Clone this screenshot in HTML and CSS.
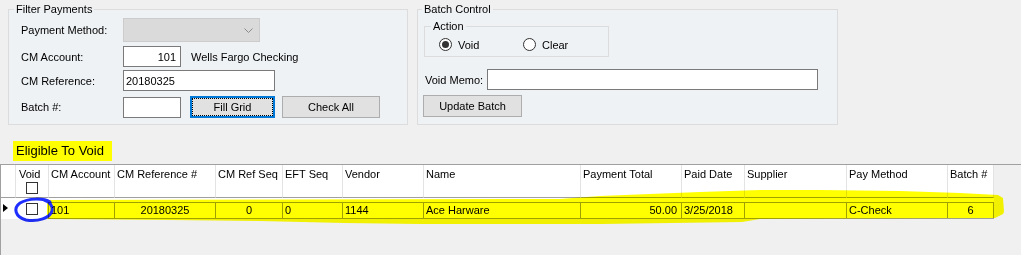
FILE: index.html
```html
<!DOCTYPE html>
<html>
<head>
<meta charset="utf-8">
<link rel="stylesheet" href="styles.css">
</head>
<body>
<div class="top">
  <fieldset class="box filter">
    <legend>Filter Payments</legend>
    <div class="frow r1">
      <label>Payment Method:</label>
      <div class="combo"><svg width="9" height="5" viewBox="0 0 9 5"><polyline points="0.5,0.5 4.5,4.5 8.5,0.5" fill="none" stroke="#8a8a8a" stroke-width="1"/></svg></div>
    </div>
    <div class="frow r2">
      <label>CM Account:</label>
      <div class="tb tb-num">101</div>
      <span class="desc">Wells Fargo Checking</span>
    </div>
    <div class="frow r3">
      <label>CM Reference:</label>
      <div class="tb tb-ref">20180325</div>
    </div>
    <div class="frow r4">
      <label>Batch #:</label>
      <div class="tb tb-num"></div>
      <button class="btn btn-fill"><span class="focus">Fill Grid</span></button>
      <button class="btn btn-check">Check All</button>
    </div>
  </fieldset>
  <fieldset class="box batch">
    <legend>Batch Control</legend>
    <fieldset class="action">
      <legend>Action</legend>
      <div class="radios">
        <div class="ropt ropt-void"><span class="radio checked"></span><span class="rlabel">Void</span></div>
        <div class="ropt"><span class="radio"></span><span class="rlabel">Clear</span></div>
      </div>
    </fieldset>
    <div class="memo">
      <label>Void Memo:</label>
      <div class="tb tb-memo"></div>
    </div>
    <button class="btn btn-update">Update Batch</button>
  </fieldset>
</div>

<div class="title">Eligible To Void</div>

<div class="grid">
  <div class="ghead">
    <div class="hc"></div>
    <div class="hc hc-void"><span>Void</span><span class="cb"></span></div>
    <div class="hc">CM Account</div>
    <div class="hc">CM Reference #</div>
    <div class="hc">CM Ref Seq</div>
    <div class="hc">EFT Seq</div>
    <div class="hc">Vendor</div>
    <div class="hc">Name</div>
    <div class="hc">Payment Total</div>
    <div class="hc">Paid Date</div>
    <div class="hc">Supplier</div>
    <div class="hc">Pay Method</div>
    <div class="hc">Batch #</div>
  </div>
  <div class="grow">
    <div class="rh"><span class="arrow"></span></div>
    <div class="dvoid"><span class="cb"></span></div>
    <div class="dc dc-first">101</div>
    <div class="dc center">20180325</div>
    <div class="dc center">0</div>
    <div class="dc">0</div>
    <div class="dc">1144</div>
    <div class="dc">Ace Harware</div>
    <div class="dc right">50.00</div>
    <div class="dc">3/25/2018</div>
    <div class="dc"></div>
    <div class="dc">C-Check</div>
    <div class="dc center">6</div>
  </div>
  <svg class="marks" width="1021" height="91" viewBox="0 0 1021 91">
    <polygon fill="#ffff00" points="47,36 560,35 600,32 650,30 700,28 760,26 820,26 900,27 960,29 998,31 1003,34 1004,48 1003,50 995,54 760,55 742,58 600,60 420,60 345,59 260,57 170,56 47,55"/>
    <path d="M50,38 C44,34 28,34 20,39 C13,44 15,53 26,56 C38,58 50,54 52,47 C53,42 50,38 44,36" fill="none" stroke="#1f2fff" stroke-width="3" stroke-linecap="round"/>
  </svg>
</div>
</body>
</html>
```

FILE: styles.css
```css
* { box-sizing: border-box; }

body {
  margin: 0;
  width: 1021px;
  height: 255px;
  overflow: hidden;
  background: #f0f0f0;
  font-family: "Liberation Sans", Arial, sans-serif;
  font-size: 11px;
  color: #000;
}

.top {
  display: flex;
  gap: 9px;
  padding: 3px 0 0 8px;
}

.box {
  margin: 0;
  border: 1px solid #dcdcdc;
  background: #eff2f5;
  min-inline-size: 0;
  height: 122px;
}

legend {
  padding: 0 2px;
  font-size: 11px;
  line-height: 12px;
}

.filter { width: 400px; padding: 0 0 0 5px; }
.batch { width: 421px; padding: 0 0 0 4px; }

.frow {
  display: flex;
  align-items: center;
  padding-left: 7px;
}
.frow label { width: 102px; }
.r1 { margin-top: 3px; height: 24px; }
.r2 { margin-top: 4px; height: 21px; }
.r3 { margin-top: 3px; height: 21px; }
.r4 { margin-top: 5px; height: 22px; }

.combo {
  width: 137px;
  height: 24px;
  background: #dadada;
  border: 1px solid #cccccc;
  display: flex;
  align-items: center;
  justify-content: flex-end;
  padding-right: 6px;
}

.tb {
  height: 21px;
  border: 1px solid #7a7a7a;
  background: #fff;
  display: flex;
  align-items: center;
}
.tb-num { width: 58px; justify-content: flex-end; padding-right: 4px; }
.tb-ref { width: 152px; padding-left: 2px; }
.tb-memo { width: 331px; }

.desc { margin-left: 10px; }

.btn {
  height: 22px;
  border: 1px solid #adadad;
  background: #e1e1e1;
  font: inherit;
  color: #000;
  padding: 0;
  display: flex;
  align-items: center;
  justify-content: center;
}
.btn-fill {
  width: 85px;
  margin-left: 9px;
  border: 2px solid #0078d7;
  align-items: stretch;
}
.btn-fill .focus {
  flex: 1;
  border: 1px dotted #000;
  display: flex;
  align-items: center;
  justify-content: center;
}
.btn-check { width: 98px; margin-left: 7px; }

.action {
  margin: 5px 0 0 2px;
  width: 185px;
  height: 37px;
  border: 1px solid #dcdcdc;
  padding: 0 0 0 6px;
  min-inline-size: 0;
}
.radios {
  display: flex;
  align-items: center;
  margin-top: 5px;
  height: 15px;
  padding-left: 8px;
}
.ropt { display: flex; align-items: center; }
.ropt-void { width: 84px; }
.radio {
  width: 13px;
  height: 13px;
  border: 1px solid #333;
  border-radius: 50%;
  background: #fff;
  display: flex;
  align-items: center;
  justify-content: center;
}
.radio.checked::after {
  content: "";
  width: 7px;
  height: 7px;
  border-radius: 50%;
  background: #333;
}
.rlabel { margin-left: 6px; }

.memo {
  display: flex;
  align-items: center;
  margin-top: 12px;
  padding-left: 3px;
}
.memo label { width: 62px; }

.btn-update { width: 99px; margin: 5px 0 0 1px; }

.title {
  width: fit-content;
  margin: 16px 0 0 13px;
  padding: 2px 8px 2px 3px;
  background: #ffff00;
  font-size: 13px;
  line-height: 16px;
}

.grid {
  position: relative;
  margin-top: 3px;
  height: 91px;
  border-top: 1px solid #a0a0a0;
  border-left: 1px solid #a0a0a0;
}

.ghead, .grow {
  display: grid;
  grid-template-columns: 15px 33px 66px 101px 67px 60px 81px 157px 101px 63px 102px 101px 46px;
  width: 993px;
}

.ghead { height: 33px; }
.hc {
  background: #fff;
  border-right: 1px solid #e3e3e3;
  border-bottom: 1px solid #a0a0a0;
  padding: 3px 0 0 2px;
  line-height: 13px;
  white-space: nowrap;
  overflow: hidden;
}
.hc-void {
  display: flex;
  flex-direction: column;
  padding-left: 3px;
}
.hc-void .cb { margin: 1px 0 0 7px; }

.cb {
  display: block;
  width: 12px;
  height: 12px;
  border: 1px solid #333;
  background: #fff;
}

.grow {
  height: 21px;
  background: #fff;
}
.rh { padding: 6px 0 0 2px; }
.arrow {
  display: block;
  width: 0;
  height: 0;
  border-left: 5px solid #000;
  border-top: 4.5px solid transparent;
  border-bottom: 4.5px solid transparent;
}
.dvoid { padding: 5px 0 0 10px; }

.dc {
  margin-top: 4px;
  height: 17px;
  border-top: 1px solid #a0a0a0;
  border-bottom: 1px solid #a0a0a0;
  border-right: 1px solid #a0a0a0;
  line-height: 15px;
  padding: 0 2px;
  white-space: nowrap;
  overflow: hidden;
}
.dc-first { box-shadow: -1px 0 0 #a0a0a0; }
.center { text-align: center; }
.right { text-align: right; padding-right: 4px; }

.marks {
  position: absolute;
  left: -1px;
  top: -1px;
  pointer-events: none;
  mix-blend-mode: multiply;
}
```
